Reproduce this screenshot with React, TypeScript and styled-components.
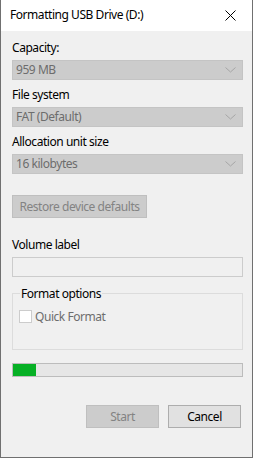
import React from 'react';
import styled, { createGlobalStyle } from 'styled-components';

const GlobalStyle = createGlobalStyle`
  html, body {
    margin: 0;
    padding: 0;
    background: #ffffff;
  }
  * {
    box-sizing: border-box;
  }
`;

const Chevron: React.FC = () => (
  <svg width="11" height="6" viewBox="0 0 11 6">
    <path d="M0.5 0.5 L5.5 5 L10.5 0.5" fill="none" stroke="#a6a6a6" strokeWidth="1" />
  </svg>
);

const CloseIcon: React.FC = () => (
  <svg width="11" height="11" viewBox="0 0 11 11">
    <path d="M0.5 0.5 L10.5 10.5 M10.5 0.5 L0.5 10.5" stroke="#000" strokeWidth="1" />
  </svg>
);

const DisabledSelect: React.FC<{ value: string }> = ({ value }) => (
  <StyledSelect>
    <span>{value}</span>
    <Chevron />
  </StyledSelect>
);

const App: React.FC = () => {
  const progress = 10;

  return (
    <>
      <GlobalStyle />
      <StyledWindow>
        <StyledTitleBar>
          <span>Formatting USB Drive (D:)</span>
          <StyledClose>
            <CloseIcon />
          </StyledClose>
        </StyledTitleBar>
        <StyledBody>
          <StyledLabel top={9}>Capacity:</StyledLabel>
          <DisabledSelect value="959 MB" />
          <StyledLabel top={7}>File system</StyledLabel>
          <DisabledSelect value="FAT (Default)" />
          <StyledLabel top={7}>Allocation unit size</StyledLabel>
          <DisabledSelect value="16 kilobytes" />
          <StyledRestore disabled>Restore device defaults</StyledRestore>
          <StyledLabel top={19}>Volume label</StyledLabel>
          <StyledInput />
          <StyledGroup>
            <legend>Format options</legend>
            <StyledCheckRow>
              <StyledCheckbox />
              <span>Quick Format</span>
            </StyledCheckRow>
          </StyledGroup>
          <StyledProgress>
            <div className="fill" style={{ width: `${progress}%` }} />
          </StyledProgress>
          <StyledActions>
            <StyledButton disabled>Start</StyledButton>
            <StyledButton>Cancel</StyledButton>
          </StyledActions>
        </StyledBody>
      </StyledWindow>
    </>
  );
};

const StyledWindow = styled.div`
  width: 253px;
  height: 458px;
  background: #f0f0f0;
  border: 1px solid #707070;
  border-top: none;
  display: flex;
  flex-direction: column;
  font-family: 'Noto Sans', 'Liberation Sans', sans-serif;
  font-size: 12px;
  letter-spacing: -0.45px;
  color: #000000;
`;

const StyledTitleBar = styled.div`
  height: 31px;
  background: #ffffff;
  display: flex;
  align-items: center;
  justify-content: space-between;
  padding-left: 9px;
  font-size: 12px;
  span {
    margin-top: -2px;
  }
`;

const StyledClose = styled.div`
  width: 46px;
  height: 31px;
  display: flex;
  align-items: center;
  justify-content: center;
  margin-right: -1px;
`;

const StyledBody = styled.div`
  flex: 1;
  display: flex;
  flex-direction: column;
  padding: 0 9px 0 11px;
`;

const StyledLabel = styled.div<{ top: number }>`
  height: 16px;
  line-height: 16px;
  margin-top: ${(p) => p.top}px;
  margin-bottom: 4px;
`;

const StyledSelect = styled.div`
  height: 20px;
  background: #cccccc;
  border: 1px solid #c4c4c4;
  display: flex;
  align-items: center;
  justify-content: space-between;
  padding: 0 6px 0 3px;
  color: #6d6d6d;
  span {
    margin-top: -1px;
  }
`;

const StyledRestore = styled.button`
  margin-top: 21px;
  width: 135px;
  height: 23px;
  background: #cccccc;
  border: 1px solid #bfbfbf;
  color: #838383;
  font-family: inherit;
  font-size: 12px;
  letter-spacing: inherit;
  padding: 0;
  line-height: 1;
`;

const StyledInput = styled.div`
  height: 20px;
  background: #f0f0f0;
  border: 1px solid #cccccc;
`;

const StyledGroup = styled.fieldset`
  margin: 9px 0 0;
  height: 64px;
  border: 1px solid #dcdcdc;
  padding: 0 6px;
  legend {
    padding: 0 1px;
    margin-left: 1px;
    line-height: 15px;
  }
`;

const StyledCheckRow = styled.div`
  display: flex;
  align-items: center;
  margin-top: 7px;
  color: #6d6d6d;
  span {
    margin-left: 3px;
  }
`;

const StyledCheckbox = styled.div`
  width: 13px;
  height: 13px;
  border: 1px solid #cccccc;
  background: #ffffff;
`;

const StyledProgress = styled.div`
  margin-top: 13px;
  height: 14px;
  background: #e6e6e6;
  border: 1px solid #bcbcbc;
  .fill {
    height: 100%;
    background: #06b025;
  }
`;

const StyledActions = styled.div`
  margin-top: 28px;
  display: flex;
  justify-content: flex-end;
  gap: 9px;
  padding-right: 2px;
`;

const StyledButton = styled.button`
  width: 73px;
  height: 23px;
  background: ${(p) => (p.disabled ? '#cccccc' : '#e1e1e1')};
  border: 1px solid ${(p) => (p.disabled ? '#bfbfbf' : '#adadad')};
  color: ${(p) => (p.disabled ? '#838383' : '#000000')};
  font-family: inherit;
  font-size: 12px;
  letter-spacing: inherit;
  padding: 0;
  line-height: 1;
`;

export default App;
